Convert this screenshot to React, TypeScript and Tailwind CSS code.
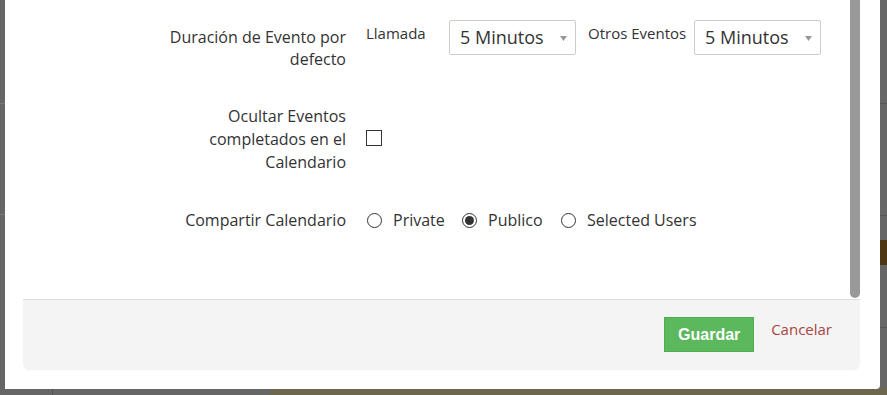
import { useState } from 'react'

const font = { fontFamily: '"Open Sans", "Liberation Sans", sans-serif' }

function Select({ value }: { value: string }) {
  return (
    <div className="relative flex h-[35px] w-[127px] items-center rounded-[2px] border border-[#ccc] bg-white pl-[10px] text-[18px] text-[#333]">
      {value}
      <svg className="absolute right-[8px] top-[15px]" width="7" height="5" viewBox="0 0 7 5">
        <path d="M0 0 L7 0 L3.5 5 Z" fill="#999" />
      </svg>
    </div>
  )
}

function Radio({ label, checked, width, onClick }: { label: string; checked: boolean; width: string; onClick: () => void }) {
  return (
    <button type="button" onClick={onClick} className={`flex items-center gap-[11px] ${width}`}>
      <span className="flex h-[15px] w-[15px] shrink-0 items-center justify-center rounded-full border border-[#333] bg-white">
        {checked && <span className="h-[9px] w-[9px] rounded-full bg-[#333]" />}
      </span>
      <span>{label}</span>
    </button>
  )
}

const options = [
  { label: 'Private', width: 'w-[95px]' },
  { label: 'Publico', width: 'w-[99px]' },
  { label: 'Selected Users', width: 'w-[140px]' },
]

export default function App() {
  const [share, setShare] = useState('Publico')
  const [hideDone, setHideDone] = useState(false)

  return (
    <div className="relative h-[395px] w-[887px] overflow-hidden bg-[#666]" style={font}>
      {/* backdrop page bits */}
      <div className="absolute left-0 top-[103px] h-px w-[5px] bg-[#7a7a7a]" />
      <div className="absolute left-0 top-[214px] h-px w-[5px] bg-[#7a7a7a]" />
      <div className="absolute right-0 top-[103px] h-px w-[7px] bg-[#555]" />
      <div className="absolute right-0 top-[215px] h-px w-[7px] bg-[#555]" />
      <div className="absolute right-0 top-[240px] h-[25px] w-[7px] bg-[#4d3613]" />
      <div className="absolute right-0 top-[327px] h-px w-[7px] bg-[#555]" />
      <div className="absolute bottom-0 left-[52px] h-[7px] w-px bg-[#555]" />
      <div className="absolute bottom-0 left-[270px] h-[7px] w-[617px] bg-[#6d6750]" />

      {/* modal */}
      <div className="absolute left-[5px] top-0 flex h-[389px] w-[875px] flex-col rounded-br-[4px] bg-white">
        <div className="relative flex h-[299px] flex-col pl-[18px] pr-[20px] text-[16px] text-[#333]">
          <div className="absolute right-[20px] top-0 h-[298px] w-[10px] rounded-b-[5px] bg-[#999]" />

          <div className="mt-[20px] flex items-start">
            <div className="w-[323px] pt-[6px] text-right leading-[22px]">
              Duración de Evento por<br />defecto
            </div>
            <div className="ml-[20px] flex items-start text-[15px]">
              <div className="mt-[3px] w-[83px] leading-[20px]">Llamada</div>
              <Select value="5 Minutos" />
              <div className="ml-[12px] mt-[3px] w-[106px] leading-[20px]">Otros Eventos</div>
              <Select value="5 Minutos" />
            </div>
          </div>

          <div className="mt-[35px] flex items-start">
            <div className="w-[323px] text-right leading-[23px]">
              Ocultar Eventos<br />completados en el<br />Calendario
            </div>
            <button
              type="button"
              onClick={() => setHideDone(!hideDone)}
              className="ml-[20px] mt-[25px] flex h-[16px] w-[16px] items-center justify-center border border-[#333] bg-white text-[11px] leading-none"
            >
              {hideDone ? '✓' : ''}
            </button>
          </div>

          <div className="mt-[35px] flex items-center leading-[23px]">
            <div className="w-[323px] text-right">Compartir Calendario</div>
            <div className="ml-[21px] flex items-center">
              {options.map((o) => (
                <Radio
                  key={o.label}
                  label={o.label}
                  width={o.width}
                  checked={share === o.label}
                  onClick={() => setShare(o.label)}
                />
              ))}
            </div>
          </div>
        </div>

        <div className="ml-[18px] mr-[20px] flex h-[71px] items-start justify-end rounded-b-[6px] border-t border-[#ddd] bg-[#f4f4f4] pr-[28px] pt-[17px]">
          <button
            type="button"
            className="h-[35px] w-[90px] border border-[#4cae4c] bg-[#5cb85c] text-[16px] font-bold text-white"
            style={{ fontFamily: '"Liberation Sans", Arial, sans-serif' }}
          >
            Guardar
          </button>
          <a href="#" className="ml-[17px] mt-[1px] text-[15px] text-[#a94442]">
            Cancelar
          </a>
        </div>
      </div>
    </div>
  )
}
